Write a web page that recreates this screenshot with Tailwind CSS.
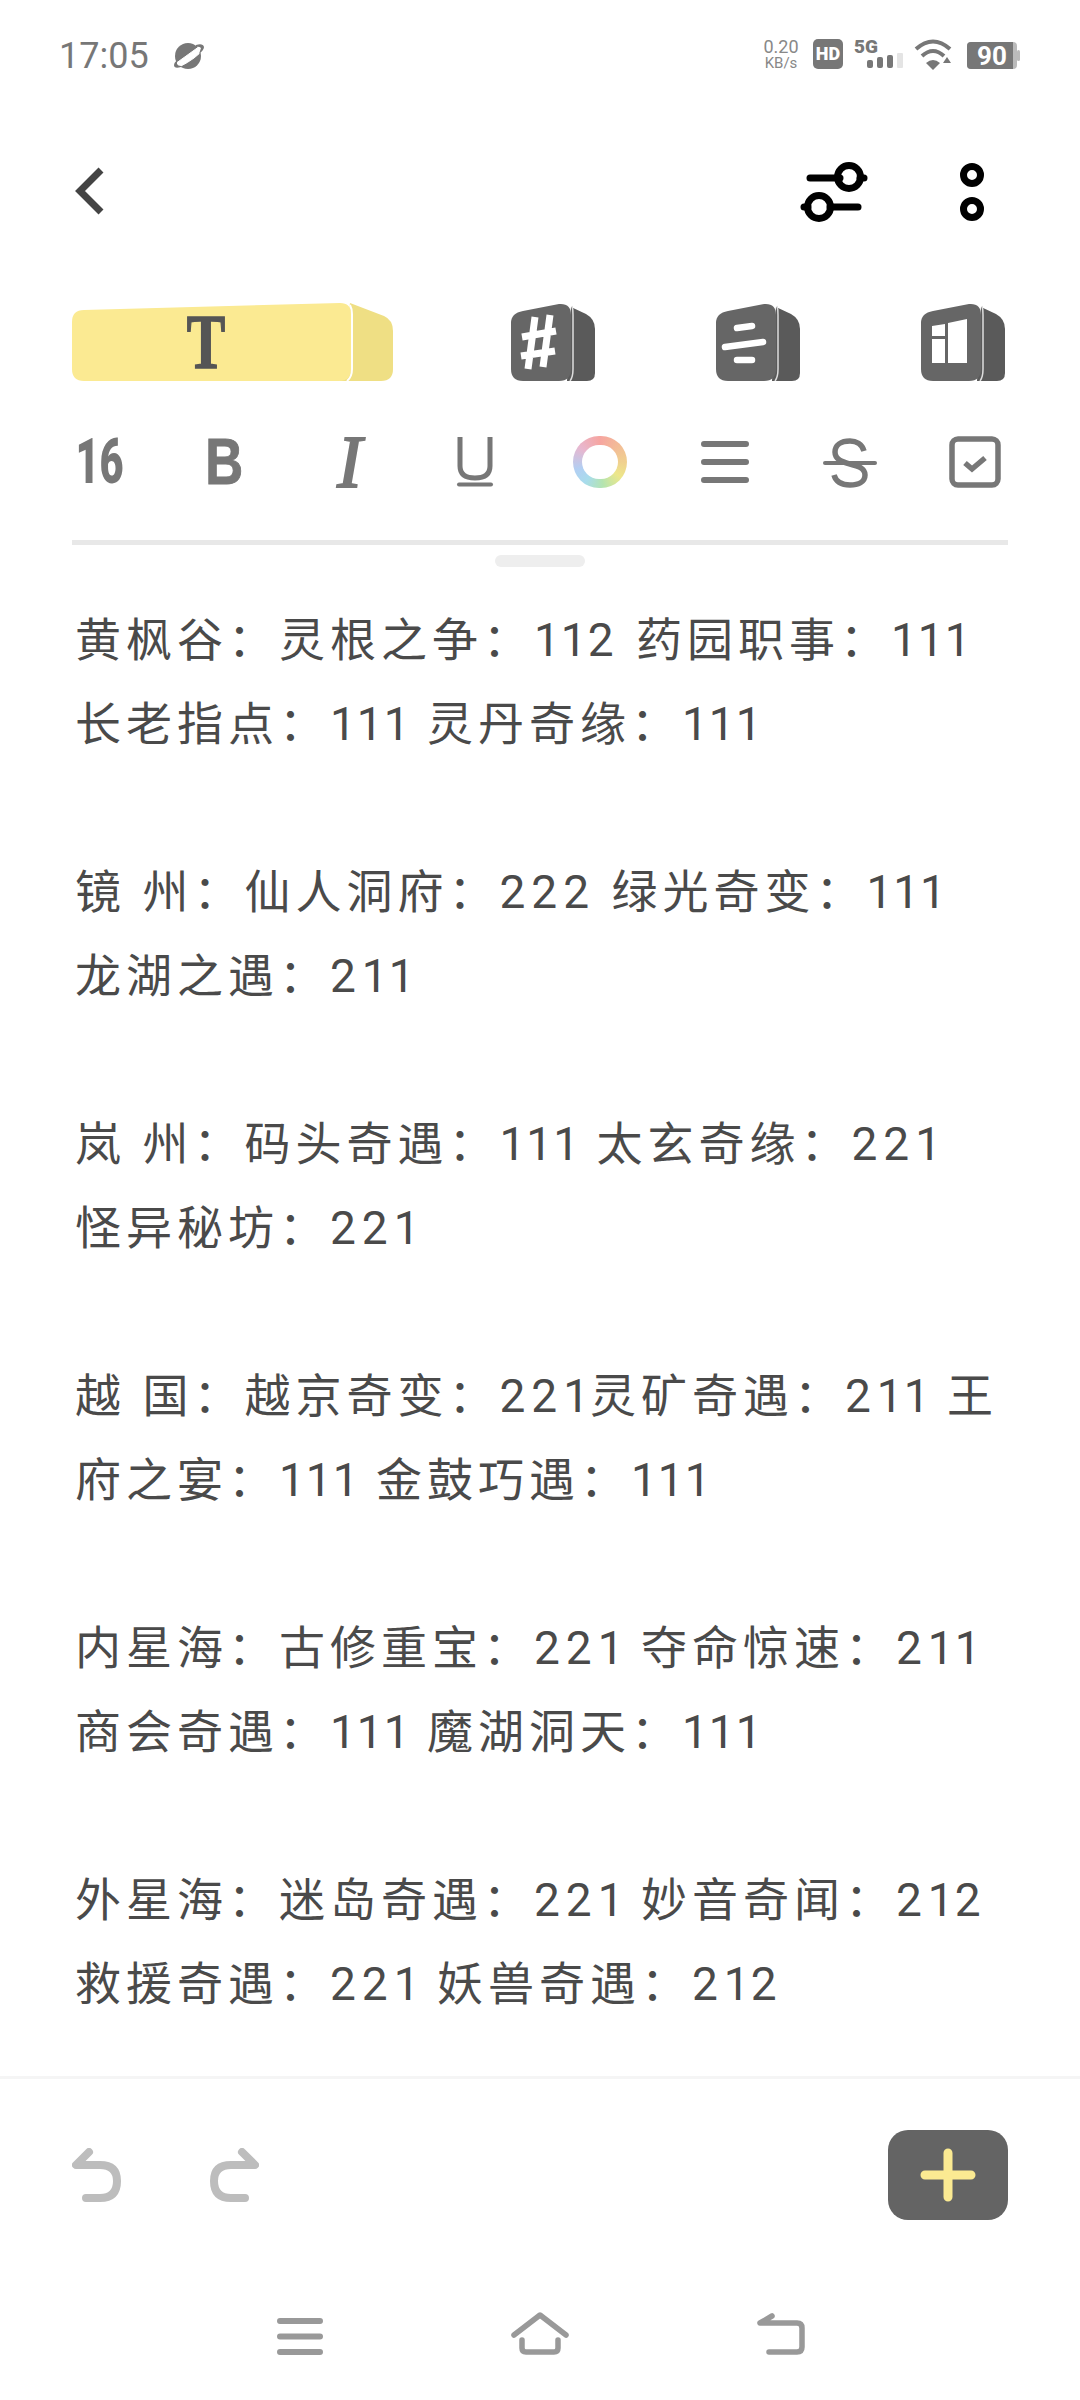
<!DOCTYPE html>
<html><head><meta charset="utf-8"><script src="https://cdn.jsdelivr.net/npm/@tailwindcss/browser@4"></script></head>
<body class="bg-white">
<div class="w-[1080px] h-[2400px] overflow-hidden bg-white flex flex-col font-['Roboto','Noto_Sans_CJK_SC',sans-serif]">
 <!-- status -->
 <div class="h-[110px] pl-[59px] pr-[58px] flex items-center justify-between shrink-0">
  <div class="flex items-center gap-[24px] mt-[1px]">
   <span class="text-[36px] leading-none text-[#777]">17:05</span>
   <svg width="32" height="28" viewBox="0 0 32 28"><circle cx="15" cy="14" r="13" fill="#777"/><path d="M2 22 L27 4 L30 7 Q24 16 6 25Z" fill="#fff" stroke="#fff"/><path d="M23 3 Q30 1 31 5 Q31 8 26 12 L28 6 Q26 4 23 5Z M8 25 Q1 27 1 23 Q1 21 4 18 L4 22 Q5 24 8 24Z" fill="#777"/></svg>
  </div>
  <svg width="260" height="36" viewBox="0 0 260 36">
   <text x="19" y="16" text-anchor="middle" font-family="Roboto" font-size="18" fill="#888">0.20</text>
   <text x="19" y="31" text-anchor="middle" font-family="Roboto" font-size="15" fill="#888">KB/s</text>
   <rect x="51" y="2" width="30" height="30" rx="5" fill="#777"/>
   <text x="66" y="23" text-anchor="middle" font-family="Roboto" font-size="18" font-weight="900" fill="#fff">HD</text>
   <text x="92" y="16" font-family="Roboto" font-size="19" font-weight="900" fill="#777">5G</text>
   <rect x="105" y="23" width="6" height="8" rx="2" fill="#777"/><rect x="115" y="20" width="6" height="11" rx="2" fill="#777"/><rect x="125" y="18" width="6" height="13" rx="2" fill="#777"/><rect x="135" y="16" width="6" height="15" rx="1" fill="#e4e4e4"/>
   <g fill="none" stroke="#777" stroke-width="4"><path d="M154 12 Q171 -3 188 12"/><path d="M160 19 Q171 9 182 19"/></g>
   <path d="M164 26 Q171 20 178 26 L171 33Z" fill="#777"/><path d="M181 26 L185 20 L189 26Z" fill="#777"/>
   <rect x="205" y="5" width="50" height="27" rx="4" fill="#bbb"/><path d="M209 5 H251 V32 H209 Q205 32 205 28 V9 Q205 5 209 5Z" fill="#777"/><rect x="255" y="13" width="3" height="11" rx="1.5" fill="#bbb"/>
   <text x="230" y="28" text-anchor="middle" font-family="Roboto" font-size="26" font-weight="700" fill="#fff">90</text>
  </svg>
 </div>
 <!-- top bar -->
 <div class="h-[62px] mt-[50px] pl-[72px] pr-[96px] flex items-center justify-between shrink-0">
  <svg width="36" height="52" viewBox="0 0 36 52"><path d="M29 5 L8 26 L29 47" fill="none" stroke="#444" stroke-width="7"/></svg>
  <div class="flex items-center gap-[92px]">
   <svg width="68" height="62" viewBox="0 0 68 62" fill="none" stroke="#000" stroke-width="7" stroke-linecap="round"><path d="M10 18 H40"/><circle cx="49" cy="17" r="11.5"/><path d="M60 18 H64"/><path d="M30 47 H58"/><circle cx="19" cy="47" r="11.5"/><path d="M4 47 H8"/></svg>
   <svg width="24" height="62" viewBox="0 0 24 62" fill="none" stroke="#000" stroke-width="7"><circle cx="12" cy="15" r="8.5"/><circle cx="12" cy="49" r="8.5"/></svg>
  </div>
 </div>
 <!-- tabs -->
 <div class="pl-[72px] mt-[81px] flex items-start h-[80px] shrink-0">
  <svg width="321" height="80" viewBox="0 0 321 80">
   <path d="M278 0 L312 13 Q321 17 321 28 V66 Q321 78 309 78 H268Z" fill="#efdf84"/>
   <path d="M12 7 L268 0 Q279 0 279 11 V66 Q279 78 267 78 H12 Q0 78 0 66 V19 Q0 7 12 7Z" fill="#fbea92"/>
   <path d="M278 2 Q280 6 280 11 V66 Q280 74 275 78" fill="none" stroke="#fff" stroke-width="2"/>
   <text transform="translate(134,65) scale(.74,1)" text-anchor="middle" font-family="'Liberation Serif'" font-weight="700" font-size="78" fill="#555" stroke="#555" stroke-width="1.5">T</text>
  </svg>
  <div class="flex gap-[121px] ml-[118px]">
   <svg width="84" height="78" viewBox="0 0 84 78"><path d="M60 4 L75 11 Q84 16 84 26 V70 Q84 78 76 78 H56Z" fill="#5a5a5a"/><path d="M12 8 L48 1 Q60 0 60 12 V66 Q60 78 48 78 H12 Q0 78 0 66 V20 Q0 10 12 8Z" fill="#666"/><path d="M61 3 Q62 6 62 12 V66 Q62 74 59 78" fill="none" stroke="#ddd" stroke-width="1.5"/><path d="M24 14 L17 66 M39 12 L32 64 M11 34 L45 28 M10 53 L44 48" stroke="#fff" stroke-width="7" fill="none"/></svg>
   <svg width="84" height="78" viewBox="0 0 84 78"><path d="M60 4 L75 11 Q84 16 84 26 V70 Q84 78 76 78 H56Z" fill="#5a5a5a"/><path d="M12 8 L48 1 Q60 0 60 12 V66 Q60 78 48 78 H12 Q0 78 0 66 V20 Q0 10 12 8Z" fill="#666"/><path d="M61 3 Q62 6 62 12 V66 Q62 74 59 78" fill="none" stroke="#ddd" stroke-width="1.5"/><path d="M21 25 L36 23 M9 44 L47 39 M21 57 L36 57" stroke="#fff" stroke-width="6.5" fill="none" stroke-linecap="round"/></svg>
   <svg width="84" height="78" viewBox="0 0 84 78"><path d="M60 4 L75 11 Q84 16 84 26 V70 Q84 78 76 78 H56Z" fill="#5a5a5a"/><path d="M12 8 L48 1 Q60 0 60 12 V66 Q60 78 48 78 H12 Q0 78 0 66 V20 Q0 10 12 8Z" fill="#666"/><path d="M61 3 Q62 6 62 12 V66 Q62 74 59 78" fill="none" stroke="#ddd" stroke-width="1.5"/><path d="M11 23 L24 21 V33 H11Z M11 36 H24 V60 H11Z M27 20 L46 16 V60 H27Z" fill="#fff"/></svg>
  </div>
 </div>
 <!-- format -->
 <div class="h-[60px] mt-[49px] pl-[37px] grid grid-cols-[repeat(8,125px)] shrink-0 text-[#777]">
  <div class="flex items-center justify-center"><span class="inline-block text-[63px] leading-[60px] font-black scale-x-[.66] font-['Roboto']">16</span></div>
  <div class="flex items-center justify-center"><span class="inline-block text-[64px] leading-[60px] font-bold scale-x-[.82] [-webkit-text-stroke:1px_#777] font-['Liberation_Sans']">B</span></div>
  <div class="flex items-center justify-center"><span class="text-[74px] leading-[60px] italic [-webkit-text-stroke:2px_#777] font-['Liberation_Serif']">I</span></div>
  <div class="flex items-center justify-center"><svg width="38" height="50" viewBox="0 0 38 50" fill="none" stroke="#777"><path d="M4 0 V29 Q4 41 19 41 Q34 41 34 29 V0" stroke-width="5"/><path d="M3 47.5 H35" stroke-width="4" stroke-linecap="round"/></svg></div>
  <div class="flex items-center justify-center"><div class="w-[54px] h-[52px] rounded-full bg-[conic-gradient(from_0deg,#f6a5a0,#f0d08f_25%,#ede78a_35%,#b4e4b0_48%,#a8dcec_60%,#b2cff3_70%,#e8b7cf_85%,#f6a5a0)] flex items-center justify-center"><div class="w-[36px] h-[34px] rounded-full bg-white"></div></div></div>
  <div class="flex items-center justify-center"><svg width="48" height="42" viewBox="0 0 48 42" stroke="#777" stroke-width="6" stroke-linecap="round"><path d="M3 3 H45 M3 21 H45 M3 39 H45"/></svg></div>
  <div class="flex items-center justify-center"><svg width="54" height="50" viewBox="0 0 54 50" fill="none" stroke="#777" class="mt-[2px]"><path d="M41 13 C39 6 33 3 27 3 C18 3 12 7 12 14 C12 22 20 24 27 26 C35 28 42 30 42 37 C42 44 35 47 27 47 C19 47 13 44 11 37" stroke-width="5.5"/><path d="M2 25 H52" stroke-width="4" stroke-linecap="round"/></svg></div>
  <div class="flex items-center justify-center"><svg width="52" height="52" viewBox="0 0 52 52" fill="none" stroke="#777"><rect x="3" y="3" width="46" height="46" rx="6" stroke-width="5.5"/><path d="M16 27 L23 33 L36 22" stroke-width="5.5"/></svg></div>
 </div>
 <div class="h-[5px] ml-[72px] w-[936px] mt-[48px] bg-[#e8e8e8] shrink-0"></div>
 <div class="w-[90px] h-[12px] rounded-full bg-[#eee] ml-[495px] mt-[10px] shrink-0"></div>
 <!-- text -->
 <div class="mt-[31px] flex-1 pl-[75px] text-[46px] leading-[84px] text-[#4a4a4a] tracking-[5px] font-normal">
  <p class="whitespace-nowrap">黄枫谷：灵根之争：<span class="tracking-[1px]">11</span><span class="tracking-[6px]">2</span> 药园职事：<span class="tracking-[1px]">111</span></p>
  <p class="whitespace-nowrap">长老指点：<span class="tracking-[1px]">111</span> 灵丹奇缘：<span class="tracking-[1px]">111</span></p>
  <p class="h-[84px]"></p>
  <p class="whitespace-nowrap">镜 州：仙人洞府：<span class="tracking-[6px]">222</span> 绿光奇变：<span class="tracking-[1px]">111</span></p>
  <p class="whitespace-nowrap">龙湖之遇：<span class="tracking-[6px]">2</span><span class="tracking-[1px]">11</span></p>
  <p class="h-[84px]"></p>
  <p class="whitespace-nowrap">岚 州：码头奇遇：<span class="tracking-[1px]">111</span> 太玄奇缘：<span class="tracking-[6px]">22</span><span class="tracking-[1px]">1</span></p>
  <p class="whitespace-nowrap">怪异秘坊：<span class="tracking-[6px]">22</span><span class="tracking-[1px]">1</span></p>
  <p class="h-[84px]"></p>
  <p class="whitespace-nowrap">越 国：越京奇变：<span class="tracking-[6px]">22</span><span class="tracking-[1px]">1</span>灵矿奇遇：<span class="tracking-[6px]">2</span><span class="tracking-[1px]">11</span> 王</p>
  <p class="whitespace-nowrap">府之宴：<span class="tracking-[1px]">111</span> 金鼓巧遇：<span class="tracking-[1px]">111</span></p>
  <p class="h-[84px]"></p>
  <p class="whitespace-nowrap">内星海：古修重宝：<span class="tracking-[6px]">22</span><span class="tracking-[1px]">1</span> 夺命惊速：<span class="tracking-[6px]">2</span><span class="tracking-[1px]">11</span></p>
  <p class="whitespace-nowrap">商会奇遇：<span class="tracking-[1px]">111</span> 魔湖洞天：<span class="tracking-[1px]">111</span></p>
  <p class="h-[84px]"></p>
  <p class="whitespace-nowrap">外星海：迷岛奇遇：<span class="tracking-[6px]">22</span><span class="tracking-[1px]">1</span> 妙音奇闻：<span class="tracking-[6px]">2</span><span class="tracking-[1px]">1</span><span class="tracking-[6px]">2</span></p>
  <p class="whitespace-nowrap">救援奇遇：<span class="tracking-[6px]">22</span><span class="tracking-[1px]">1</span> 妖兽奇遇：<span class="tracking-[6px]">2</span><span class="tracking-[1px]">1</span><span class="tracking-[6px]">2</span></p>
 </div>
 <!-- bottom -->
 <div class="h-[324px] shrink-0 border-t-[3px] border-[#f5f5f5] pt-[51px]">
  <div class="h-[90px] pl-[72px] pr-[72px] flex items-center justify-between">
   <div class="flex items-center gap-[89px]">
    <svg width="49" height="54" viewBox="0 0 49 54" fill="none" stroke="#bdbdbd" stroke-width="8" stroke-linecap="round" stroke-linejoin="round"><path d="M17 4 L4 17 H28 Q45 17 45 33 Q45 50 28 50 H14"/></svg>
    <svg width="49" height="54" viewBox="0 0 49 54" fill="none" stroke="#bdbdbd" stroke-width="8" stroke-linecap="round" stroke-linejoin="round"><path d="M32 4 L45 17 H21 Q4 17 4 33 Q4 50 21 50 H35"/></svg>
   </div>
   <div class="w-[120px] h-[90px] rounded-[20px] bg-[#646464] flex items-center justify-center">
    <svg width="56" height="54" viewBox="0 0 56 54" stroke="#fbea92" stroke-width="9" stroke-linecap="round"><path d="M28 5 V49 M5 27 H51"/></svg>
   </div>
  </div>
  <div class="mt-[92px] pl-[277px] flex items-end gap-[188px]">
   <svg width="46" height="37" viewBox="0 0 46 37" stroke="#999" stroke-width="6" stroke-linecap="round"><path d="M3 3 H43 M3 18.500 H43 M3 34 H43"/></svg>
   <svg width="58" height="43" viewBox="0 0 58 43" fill="none" stroke="#999" stroke-width="5.5" stroke-linecap="round" stroke-linejoin="round"><path d="M3 23 L29 3 L55 23"/><path d="M11 28 V36 Q11 40 15 40 H43 Q47 40 47 36 V28"/></svg>
   <svg width="48" height="42" viewBox="0 0 48 42" fill="none" stroke="#999" stroke-width="5.5" stroke-linecap="round" stroke-linejoin="round"><path d="M15 3 L3 10 H40 Q45 10 45 15 V34 Q45 39 40 39 H12"/></svg>
  </div>
 </div>
</div>
</body></html>
